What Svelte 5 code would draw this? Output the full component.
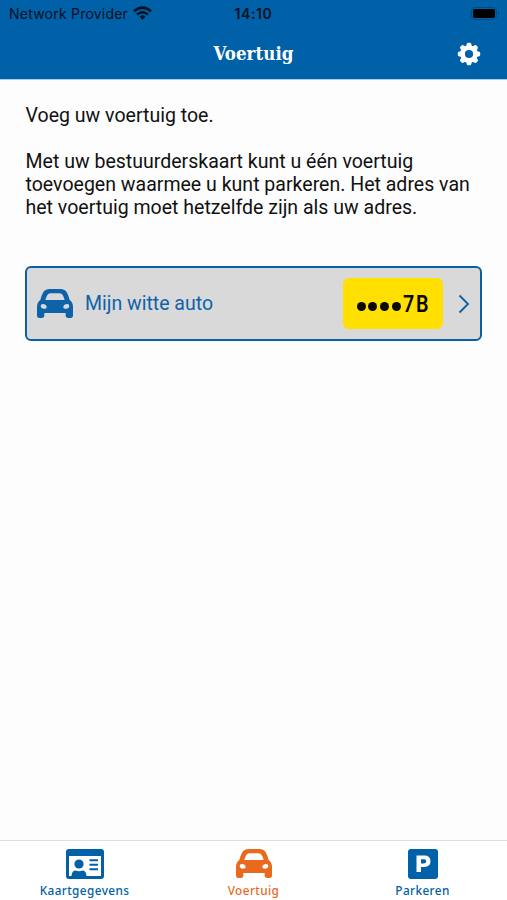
<script lang="ts">
  type Tab = {
    label: string;
    icon: 'card' | 'car' | 'parking';
  };

  const tabs: Tab[] = [
    { label: 'Kaartgegevens', icon: 'card' },
    { label: 'Voertuig', icon: 'car' },
    { label: 'Parkeren', icon: 'parking' },
  ];

  const teeth = [0, 45, 90, 135, 180, 225, 270, 315];

  let active = $state('Voertuig');
</script>

{#snippet car()}
  <svg class="car" viewBox="0 0 108 87" fill="currentColor">
    <path
      fill-rule="evenodd"
      d="M38 0H70Q84 0 90 11Q95 20 98 33Q108 40 108 54V79Q108 87 101 87H94Q86 87 86 79V72H22V79Q22 87 14 87H7Q0 87 0 79V54Q0 40 10 33Q13 20 18 11Q24 0 38 0ZM40 13Q34 13 31 18Q27 25 25 33H83Q81 25 77 18Q74 13 68 13ZM11 51Q12 59 21 59Q30 59 29 53Q27 45 18 45Q11 45 11 51ZM97 51Q96 59 87 59Q78 59 79 53Q81 45 90 45Q97 45 97 51Z"
    />
  </svg>
{/snippet}

<div class="screen">
  <header>
    <div class="status">
      <div class="provider">
        <span>Network Provider</span>
        <svg width="19" height="14" viewBox="0 0 19 14" fill="none" stroke="currentColor" stroke-width="2.6">
          <path d="M1 5.200Q9.500-2 18 5.200M4 8.500Q9.500 4 15 8.500" />
          <path d="M6.500 10.500Q9.500 8.200 12.500 10.500L9.500 13.700Z" fill="currentColor" stroke="none" />
        </svg>
      </div>
      <span class="time">14:10</span>
      <svg class="battery" width="30" height="13" viewBox="0 0 30 13">
        <rect x=".5" y=".5" width="25" height="12" rx="3.500" fill="none" stroke="#004c8b" />
        <rect x="2" y="2" width="22" height="9" rx="1.800" />
        <path d="M27 4.500Q29 6 27 8Z" fill="#003f78" />
      </svg>
    </div>
    <div class="nav">
      <h1>Voertuig</h1>
      <button class="settings" aria-label="Instellingen">
        <svg width="24" height="24" viewBox="-12 -12 24 24">
          <circle r="6.400" fill="none" stroke="#fff" stroke-width="4.600" />
          {#each teeth as angle}
            <path d="M-3-7.500L-2.200-10.300Q-1.900-11.200-1-11.200H1Q1.900-11.200 2.200-10.300L3-7.500Z" fill="#fff" transform="rotate({angle})" />
          {/each}
        </svg>
      </button>
    </div>
  </header>

  <main>
    <p>Voeg uw voertuig toe.</p>
    <p>
      Met uw bestuurderskaart kunt u één voertuig<br />
      toevoegen waarmee u kunt parkeren. Het adres van<br />
      het voertuig moet hetzelfde zijn als uw adres.
    </p>

    <button class="vehicle">
      {@render car()}
      <span class="name">Mijn witte auto</span>
      <span class="plate">
        <span class="dots">{#each [0, 1, 2, 3] as _}<i></i>{/each}</span>
        <span class="digits">7B</span>
      </span>
      <svg class="chevron" width="12" height="20" viewBox="0 0 12 20" fill="none" stroke="currentColor" stroke-width="1.900">
        <path d="M1.500 1.500L10 10L1.500 18.500" />
      </svg>
    </button>
  </main>

  <nav class="tabs">
    {#each tabs as tab}
      <button class="tab" class:active={tab.label === active} onclick={() => (active = tab.label)}>
        <span class="icon">
          {#if tab.icon === 'card'}
            <svg width="38" height="30" viewBox="0 0 38 30" fill="currentColor">
              <path fill-rule="evenodd" d="M3 0H35Q38 0 38 3V27Q38 30 35 30H3Q0 30 0 27V3Q0 0 3 0ZM3 7V27H5.500Q6 21.500 9.500 21.500Q13 23 16.500 21.500Q20 21.500 20.500 27H35V7Z" />
              <circle cx="13" cy="15" r="4.600" />
              <path d="M23.500 10.200H32V12.200H23.500ZM23.500 14.700H32V16.700H23.500ZM23.500 19.200H32V21.200H23.500Z" />
            </svg>
          {:else if tab.icon === 'car'}
            {@render car()}
          {:else}
            <svg width="30" height="30" viewBox="0 0 30 30" fill="currentColor">
              <path fill-rule="evenodd" d="M3 0H27Q30 0 30 3V27Q30 30 27 30H3Q0 30 0 27V3Q0 0 3 0ZM8.500 6.500V23H13V18H16.500Q22.500 17.500 22.500 12.200Q22.500 6.500 16.500 6.500ZM13 10.200H16Q18.300 10.200 18.300 12.300Q18.300 14.400 16 14.400H13Z" />
            </svg>
          {/if}
        </span>
        <span class="label">{tab.label}</span>
      </button>
    {/each}
  </nav>
</div>

<style>
  :global(body) {
    margin: 0;
  }

  button {
    padding: 0;
    border: 0;
    background: none;
    font: inherit;
    color: inherit;
  }

  svg {
    display: block;
    flex: none;
  }

  .screen {
    display: flex;
    flex-direction: column;
    height: 900px;
    background: #fdfdfd;
    color: #111;
    font-family: Roboto, sans-serif;
  }

  header {
    box-sizing: border-box;
    height: 80px;
    border-bottom: 1px solid #a5d0ee;
    background: #0060a8;
  }

  .status {
    display: grid;
    grid-template-columns: 1fr auto 1fr;
    align-items: center;
    height: 27px;
    padding: 0 6px 0 9px;
    color: #04111f;
    font-family: Inter, sans-serif;
    font-size: 14px;
  }

  .provider {
    display: flex;
    align-items: center;
    gap: 5px;
  }

  .provider span {
    letter-spacing: 0.22px;
  }

  .provider svg {
    margin-top: -2px;
  }

  .time {
    margin-right: 3px;
    font-weight: 600;
    letter-spacing: 0.6px;
  }

  .battery {
    justify-self: end;
  }

  .nav {
    display: grid;
    grid-template-columns: 1fr auto 1fr;
    align-items: center;
    height: 52px;
    padding: 0 26px;
  }

  h1 {
    grid-column: 2;
    margin: 0;
    color: #fff;
    font-family: 'DejaVu Serif Condensed', 'DejaVu Serif', serif;
    font-stretch: condensed;
    font-size: 18.5px;
    font-weight: 700;
    letter-spacing: 0.1px;
  }

  .settings {
    justify-self: end;
    margin-top: 1px;
  }

  main {
    flex: 1;
    padding: 24px 25px 0;
  }

  p {
    margin: 0 0 23px;
    padding-left: 0.5px;
    font-size: 19.55px;
    line-height: 23px;
    white-space: nowrap;
  }

  .vehicle {
    box-sizing: border-box;
    display: flex;
    align-items: center;
    width: 457px;
    height: 75px;
    margin-top: 47px;
    padding: 0 10px;
    border: 2px solid #0b60a5;
    border-radius: 6px;
    background: #d9d9d9;
    color: #0e62aa;
  }

  .car {
    width: 36px;
    height: 29px;
  }

  .name {
    flex: 1;
    margin-left: 12px;
    font-size: 19.5px;
    text-align: left;
  }

  .plate {
    display: flex;
    align-items: center;
    box-sizing: border-box;
    width: 100px;
    height: 51px;
    margin-right: 15px;
    padding-left: 13.5px;
    border-radius: 6px;
    background: #ffe000;
    color: #0b0a00;
  }

  .dots {
    display: flex;
    gap: 2.7px;
    margin-top: 5px;
  }

  .dots i {
    width: 9px;
    height: 9px;
    border-radius: 50%;
    background: currentColor;
  }

  .digits {
    margin-left: 2.5px;
    font-size: 23.5px;
    font-weight: 600;
    letter-spacing: 2px;
    transform: scaleX(0.84);
    transform-origin: left;
  }

  .tabs {
    box-sizing: border-box;
    display: grid;
    grid-template-columns: repeat(3, 1fr);
    height: 60px;
    border-top: 1px solid #dedede;
    background: #fff;
    color: #0060a8;
  }

  .tab {
    display: flex;
    flex-direction: column;
    align-items: center;
    padding-top: 7px;
  }

  .tab.active {
    color: #e9691f;
  }

  .icon {
    display: grid;
    place-items: center;
    height: 31px;
  }

  .label {
    margin-top: 3px;
    font-family: 'Noto Sans', sans-serif;
    font-size: 11.8px;
    font-weight: 500;
    line-height: 16px;
    letter-spacing: 0.4px;
  }
</style>
